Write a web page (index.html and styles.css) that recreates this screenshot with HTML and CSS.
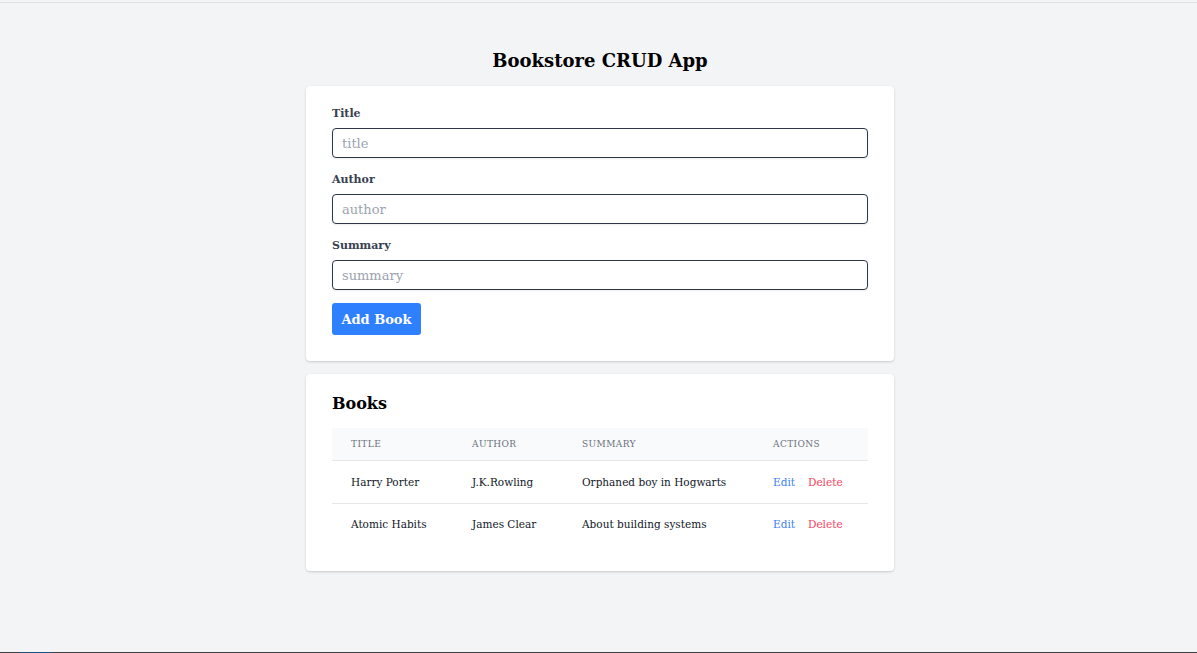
FILE: index.html
```html
<!DOCTYPE html>
<html lang="en">
<head>
<meta charset="utf-8">
<title>Bookstore CRUD App</title>
<link rel="stylesheet" href="styles.css">
</head>
<body>
<div class="page">
  <main class="container">
    <h1 class="app-title">Bookstore CRUD App</h1>
    <section class="card form-card">
      <div class="field">
        <label class="label" for="title">Title</label>
        <input class="input" id="title" type="text" placeholder="title">
      </div>
      <div class="field">
        <label class="label" for="author">Author</label>
        <input class="input" id="author" type="text" placeholder="author">
      </div>
      <div class="field">
        <label class="label" for="summary">Summary</label>
        <input class="input" id="summary" type="text" placeholder="summary">
      </div>
      <button class="btn" type="button">Add Book</button>
    </section>
    <section class="card list-card">
      <h2 class="list-title">Books</h2>
      <table class="table">
        <thead>
          <tr>
            <th class="col-title">Title</th>
            <th class="col-author">Author</th>
            <th class="col-summary">Summary</th>
            <th class="col-actions">Actions</th>
          </tr>
        </thead>
        <tbody>
          <tr>
            <td>Harry Porter</td>
            <td>J.K.Rowling</td>
            <td>Orphaned boy in Hogwarts</td>
            <td><a class="link edit" href="#">Edit</a><a class="link delete" href="#">Delete</a></td>
          </tr>
          <tr>
            <td>Atomic Habits</td>
            <td>James Clear</td>
            <td>About building systems</td>
            <td><a class="link edit" href="#">Edit</a><a class="link delete" href="#">Delete</a></td>
          </tr>
        </tbody>
      </table>
    </section>
  </main>
  <div class="bottom-bar"><span class="bar-accent"></span></div>
</div>
</body>
</html>
```
FILE: styles.css
```css
* { box-sizing: border-box; }
html, body { margin: 0; padding: 0; }
body {
  background: #f3f4f6;
  font-family: Georgia, "DejaVu Serif", "Liberation Serif", serif;
  color: #111827;
}
.page {
  min-height: 653px;
  height: 100vh;
  display: flex;
  flex-direction: column;
  padding-top: 2px;
}
.container {
  flex: 1;
  width: 100%;
  padding-left: 3px;
  border-top: 1px solid #dfe1e1;
  display: flex;
  flex-direction: column;
  align-items: center;
}
.app-title {
  margin: 0;
  padding-top: 44px;
  height: 83px;
  font-size: 18px;
  line-height: 28px;
  font-weight: bold;
  color: #000;
}
.card {
  width: 588px;
  background: #fff;
  border-radius: 4px;
  box-shadow: 0 1px 3px rgba(0,0,0,0.12), 0 1px 2px rgba(0,0,0,0.06);
  padding: 19px 26px 26px;
}
.form-card { margin-bottom: 13px; }
.field { margin-bottom: 13px; }
.label {
  display: block;
  font-size: 11px;
  line-height: 17px;
  font-weight: bold;
  color: #374151;
  margin-bottom: 6px;
}
.input {
  display: block;
  width: 100%;
  height: 30px;
  border: 1px solid #2d3748;
  border-radius: 4px;
  padding: 0 9px;
  font-family: inherit;
  font-size: 13px;
  color: #111827;
  background: #fff;
  box-shadow: 0 1px 2px rgba(0,0,0,0.08);
}
.input::placeholder { color: #9ca3af; }
.btn {
  display: block;
  height: 32px;
  width: 89px;
  padding: 0;
  border: none;
  border-radius: 3px;
  background: #2f80ff;
  color: #fff;
  font-family: inherit;
  font-weight: bold;
  font-size: 13px;
}
.list-card { padding-top: 18px; }
.list-title {
  margin: 0 0 12px;
  font-size: 16px;
  line-height: 24px;
  font-weight: bold;
  color: #000;
}
.table {
  width: 100%;
  border-collapse: collapse;
}
.table th {
  background: #f9fafb;
  height: 32px;
  padding: 0 0 0 19px;
  text-align: left;
  font-weight: normal;
  text-transform: uppercase;
  font-size: 9px;
  letter-spacing: 0.4px;
  color: #6b7280;
  border-bottom: 1px solid #e5e7eb;
}
.table td {
  padding: 0 0 0 19px;
  height: 43px;
  font-size: 10.5px;
  color: #111827;
  border-bottom: 1px solid #e5e7eb;
}
.table tbody tr:last-child td { border-bottom: none; height: 42px; }
.col-title { width: 121px; }
.col-author { width: 110px; }
.col-summary { width: 191px; }
.link {
  text-decoration: none;
  font-size: 10.5px;
}
.edit { color: #3b82f6; margin-right: 13px; }
.delete { color: #f43f5e; }
.bottom-bar {
  height: 1px;
  background: #3c4043;
  position: relative;
}
.bar-accent {
  position: absolute;
  left: 20px;
  top: 0;
  width: 33px;
  height: 1px;
  background: #1e4f7a;
}
```
